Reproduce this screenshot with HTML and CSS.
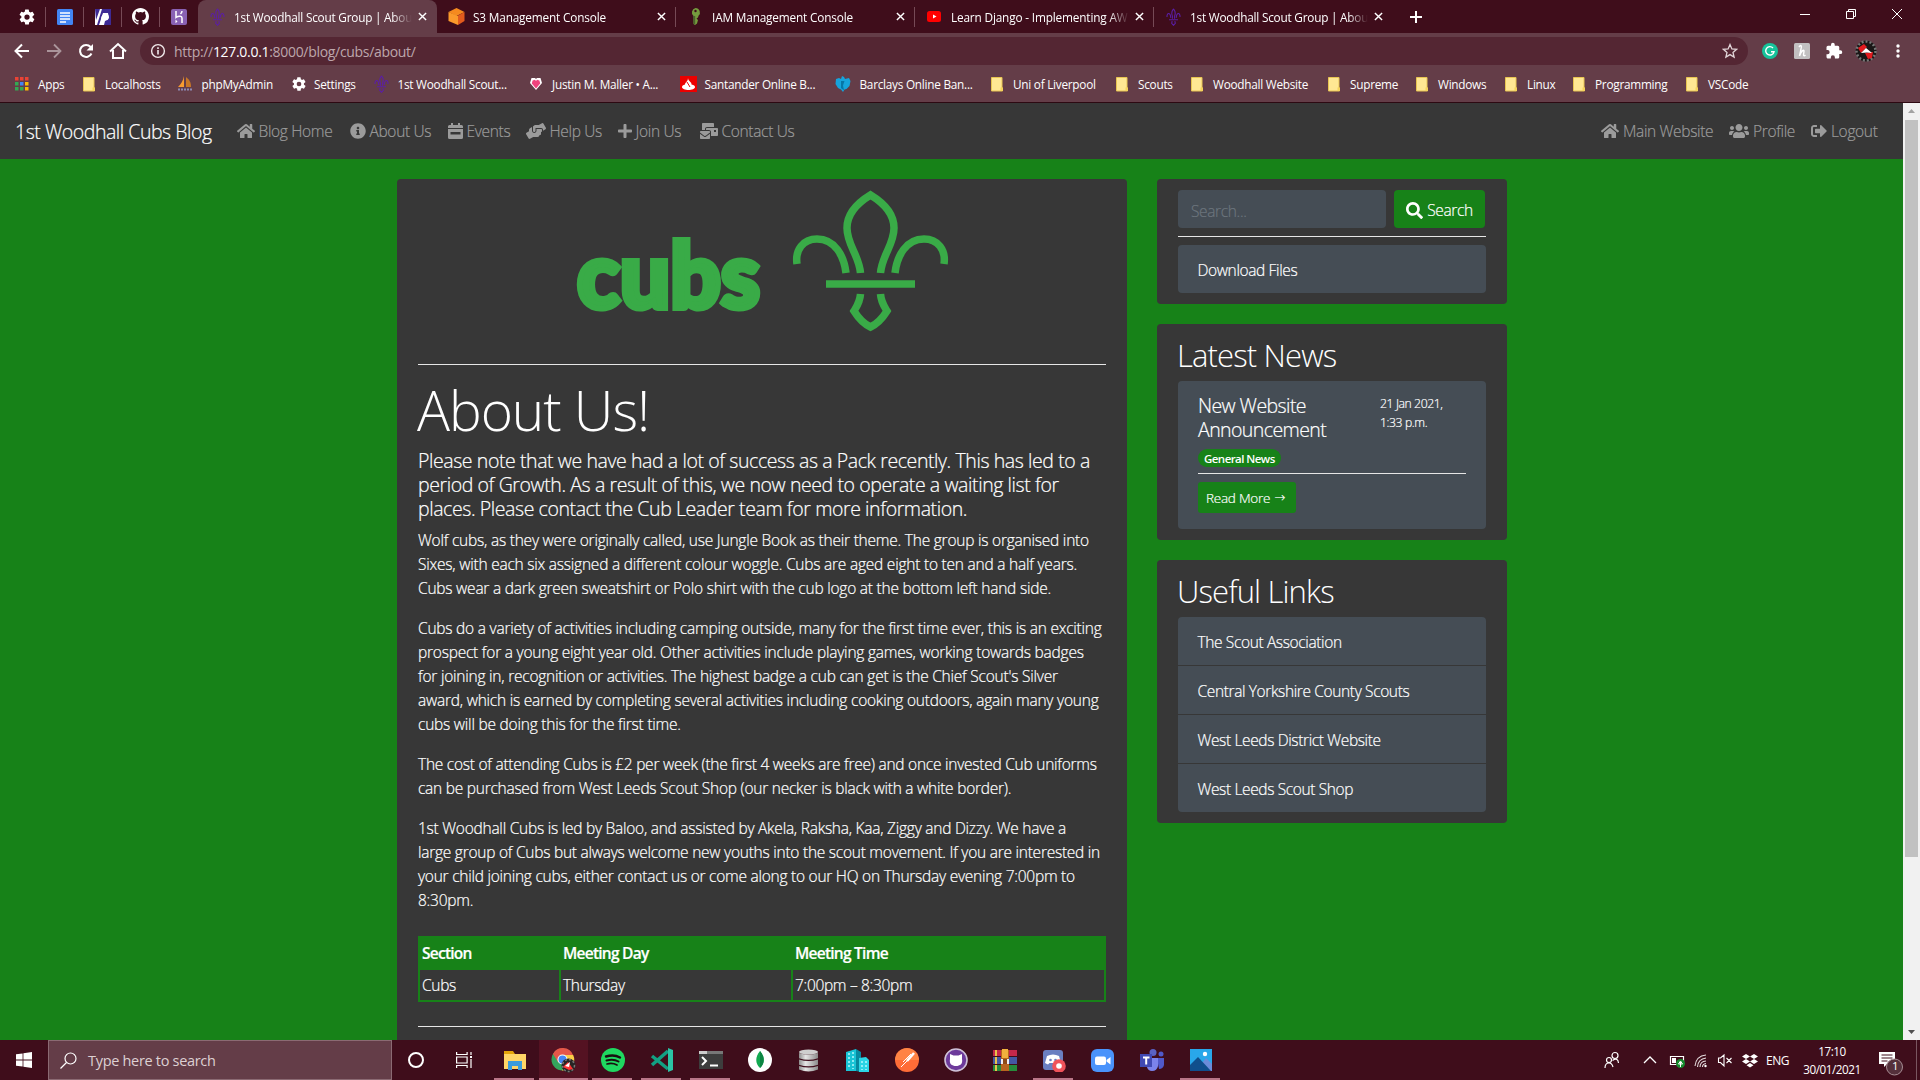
FILE: index.html
```html
<!DOCTYPE html>
<html lang="en">
<head>
<meta charset="utf-8">
<title>1st Woodhall Scout Group | About</title>
<link rel="stylesheet" href="styles.css">
</head>
<body>
<svg class="defs" width="0" height="0" aria-hidden="true">
  <symbol id="fleur" viewBox="0 0 16 20"><g fill="none" stroke="currentColor" stroke-width="1.2"><path d="M8 1C5.5 4 5.500 6 6.800 9V12M8 1c2.500 3 2.500 5 1.200 8v3M.8 10C.4 5 4.500 4.500 5 11M15.200 10c.4-5-3.700-5.500-4.200 1M3 13h10M6.500 14.500 6 17l2 2.200L10 17l-.5-2.500"/></g></symbol>
  <symbol id="gear" viewBox="0 0 24 24"><path fill="currentColor" fill-rule="evenodd" d="M19.400 13a7.500 7.500 0 0 0 0-2l2.100-1.700a.5.5 0 0 0 .1-.6l-2-3.500a.5.5 0 0 0-.6-.2l-2.500 1a7.300 7.300 0 0 0-1.700-1l-.4-2.600a.5.5 0 0 0-.5-.4h-4a.5.5 0 0 0-.5.400l-.4 2.600a7.700 7.700 0 0 0-1.700 1l-2.500-1a.5.5 0 0 0-.6.200l-2 3.500a.5.5 0 0 0 .1.600L4.500 11a7.500 7.500 0 0 0 0 2l-2.100 1.700a.5.5 0 0 0-.1.600l2 3.500c.1.200.4.300.6.200l2.500-1c.5.400 1.100.7 1.700 1l.4 2.600c0 .2.2.4.5.4h4c.2 0 .5-.2.5-.4l.4-2.600c.6-.3 1.200-.6 1.700-1l2.500 1c.2.100.5 0 .6-.2l2-3.500a.5.5 0 0 0-.1-.6zM12 15.500a3.500 3.500 0 1 1 0-7 3.500 3.500 0 0 1 0 7z"/></symbol>
  <symbol id="folder" viewBox="0 0 12 15"><path fill="#ffe793" stroke="#e8c552" d="M.5.5h10.500v10.500h.5v3H.5z"/><path fill="#f5d35b" d="M9.500 10.500H12V14H9.500z"/></symbol>
  <symbol id="close" viewBox="0 0 10 10"><path stroke="#fff" stroke-width="1.600" d="m1 1 8 8M9 1 1 9"/></symbol>
  <symbol id="home" viewBox="0 0 576 512"><path fill="currentColor" d="M280.370 148.260L96 300.110V464a16 16 0 0 0 16 16l112.060-.29a16 16 0 0 0 15.920-16V368a16 16 0 0 1 16-16h64a16 16 0 0 1 16 16v95.640a16 16 0 0 0 16 16.050L464 480a16 16 0 0 0 16-16V300L295.670 148.260a12.190 12.190 0 0 0-15.300 0zM571.600 251.470L488 182.560V44.050a12 12 0 0 0-12-12h-56a12 12 0 0 0-12 12v72.610L318.470 43a48 48 0 0 0-61 0L4.340 251.470a12 12 0 0 0-1.600 16.900l25.500 31A12 12 0 0 0 45.150 301l235.220-193.740a12.190 12.190 0 0 1 15.300 0L530.900 301a12 12 0 0 0 16.900-1.600l25.500-31a12 12 0 0 0-1.700-16.930z"/></symbol>
</svg>

<header class="browser">
  <div class="tabstrip">
    <div class="pinned"><svg width="18" height="18"><use href="#gear"/></svg></div>
    <div class="pinned"><svg width="16" height="16"><rect width="16" height="16" rx="1.500" fill="#4285f4"/><path stroke="#fff" stroke-width="1.500" d="M3 4h10M3 7h10M3 10h10M3 13h6"/></svg></div>
    <div class="pinned"><svg width="16" height="16"><path fill="#fff" d="M0 0h16v16H0z"/><path fill="#3e2a94" d="M0 0h5L1 11zM7 0h9v16H9l1-4 4-3-1-5H8L4 16H2z"/><path fill="none" stroke="#fff" stroke-width="1.500" d="M7 11c-1-6 6-7 6-3s-5 3-6 1"/></svg></div>
    <div class="pinned"><svg width="17" height="17" viewBox="0 0 16 16"><path fill="#fff" d="M8 0C3.580 0 0 3.580 0 8c0 3.540 2.290 6.530 5.470 7.590.4.070.55-.17.55-.38 0-.19-.01-.82-.01-1.490-2.010.37-2.530-.49-2.690-.94-.09-.23-.48-.94-.82-1.130-.28-.15-.68-.52-.01-.53.63-.01 1.080.58 1.230.82.72 1.210 1.870.87 2.330.66.070-.52.280-.87.510-1.070-1.780-.2-3.640-.89-3.640-3.950 0-.87.310-1.590.820-2.150-.08-.2-.36-1.020.08-2.120 0 0 .670-.21 2.200.82a7.600 7.600 0 0 1 4 0c1.530-1.040 2.200-.82 2.200-.82.440 1.100.160 1.920.080 2.120.510.560.820 1.270.820 2.150 0 3.070-1.870 3.750-3.650 3.950.290.250.540.730.540 1.480 0 1.070-.01 1.930-.01 2.200 0 .210.150.460.550.380A8 8 0 0 0 16 8c0-4.420-3.580-8-8-8z"/></svg></div>
    <div class="pinned last"><svg width="16" height="16"><rect width="16" height="16" rx="2" fill="#8961b3"/><path fill="none" stroke="#fff" stroke-width="1.500" d="M5 2v6.500c3-2 6-1.500 6 .500v5M11 2c0 1.500-.5 2-1.500 3"/><path fill="#fff" d="m4.500 10.500 2 2-2 1.800z"/></svg></div>
    <div class="tab active"><svg class="fav fleur" width="17" height="18"><use href="#fleur"/></svg><span>1st Woodhall Scout Group | Abou</span><svg class="x" width="9" height="9"><use href="#close"/></svg></div>
    <div class="tab"><svg class="fav" width="17" height="17"><path fill="#f58a1f" d="m8.500 0 8 4-8 4-8-4z"/><path fill="#fb9a2b" d="M.5 4 10 8v9L.5 13z"/><path fill="#e25b1d" d="M16.500 4 10 7.500V17l6.500-4z"/></svg><span>S3 Management Console</span><svg class="x" width="9" height="9"><use href="#close"/></svg></div>
    <div class="tab"><svg class="fav" width="17" height="17"><path fill="#759c3e" d="M8.500 0a4.500 4.500 0 0 1 3 7.800L11 9.500l-1.500 1L11 12l-1 3.500-2 1.500-1.500-1V8A4.600 4.600 0 0 1 8.500 0z"/><path fill="#4b612c" d="M6 8h2.200v8.500L6.500 15.500z"/><circle cx="8.500" cy="3" r="1.200" fill="#3f0d1b"/></svg><span>IAM Management Console</span><svg class="x" width="9" height="9"><use href="#close"/></svg></div>
    <div class="tab"><svg class="fav" width="17" height="17"><rect x="1" y="3" width="14" height="11" rx="2.500" fill="#f00"/><path fill="#fff" d="M7 6.500v4l3.500-2z"/></svg><span>Learn Django - Implementing AW</span><svg class="x" width="9" height="9"><use href="#close"/></svg></div>
    <div class="tab final"><svg class="fav fleur" width="17" height="18"><use href="#fleur"/></svg><span>1st Woodhall Scout Group | Abou</span><svg class="x" width="9" height="9"><use href="#close"/></svg></div>
    <svg class="newtab" width="14" height="14"><path stroke="#fff" stroke-width="2" d="M7 1v12M1 7h12"/></svg>
    <div class="winctl">
      <svg width="46" height="28"><path stroke="#fff" d="M18 14.500h10"/></svg>
      <svg width="46" height="28"><path fill="none" stroke="#fff" d="M18.500 11.500h7v7h-7zM20.500 11.500v-2h7v7h-2"/></svg>
      <svg width="46" height="28"><path stroke="#fff" d="m18 9 10 10M28 9 18 19"/></svg>
    </div>
  </div>

  <div class="toolbar">
    <div class="tool"><svg width="16" height="16"><path fill="none" stroke="#fff" stroke-width="2" d="M15 8H2m6-6.500L1.500 8 8 14.500"/></svg></div>
    <div class="tool dim"><svg width="16" height="16"><path fill="none" stroke="#fff" stroke-width="1.800" d="M1 8h13M8 1.500 14.500 8 8 14.500"/></svg></div>
    <div class="tool"><svg width="16" height="16"><path fill="none" stroke="#fff" stroke-width="2" d="M13.500 10.500A6 6 0 1 1 12.600 4"/><path fill="#fff" d="M15 1v6.500H8.500z"/></svg></div>
    <div class="tool"><svg width="18" height="18"><path fill="none" stroke="#fff" stroke-width="2" d="M1 9.500 9 2l8 7.500M4 8v8h10V8"/></svg></div>
    <div class="omnibox">
      <svg width="16" height="16"><circle cx="8" cy="8" r="6.400" fill="none" stroke="#f1e9eb" stroke-width="1.400"/><path stroke="#f1e9eb" stroke-width="1.600" d="M8 7v4.500M8 4.200v1.700"/></svg>
      <span class="url">http://<b>127.0.0.1</b>:8000/blog/cubs/about/</span>
      <svg class="star" width="16" height="16"><path fill="none" stroke="#e2d5d8" stroke-width="1.300" d="m8 1.500 1.900 4.400 4.700.4-3.600 3.100 1.100 4.700L8 11.600l-4.100 2.500L5 9.400 1.400 6.300l4.700-.4z"/></svg>
    </div>
    <div class="tool"><svg width="16" height="16"><circle cx="8" cy="8" r="8" fill="#15c39a"/><path fill="none" stroke="#fff" stroke-width="1.400" d="M11 5a4.200 4.200 0 1 0 1 3.800H9"/></svg></div>
    <div class="tool"><svg width="16" height="16"><rect width="16" height="16" rx="1.500" fill="#c2c0c1"/><path fill="none" stroke="#fff" stroke-width="1.400" d="M5 4c2-3 3-1 2 2l-1.500 7C7 8 10 6 10 8l-.5 4c0 1 1 1 2 0"/></svg></div>
    <div class="tool"><svg width="18" height="18" viewBox="0 0 24 24"><path fill="#fff" d="M20.500 11H19V7a2 2 0 0 0-2-2h-4V3.500a2.500 2.500 0 0 0-5 0V5H4a2 2 0 0 0-2 2v3.800h1.500a2.700 2.700 0 0 1 0 5.400H2V20c0 1.100.9 2 2 2h3.800v-1.500a2.700 2.700 0 0 1 5.400 0V22H17a2 2 0 0 0 2-2v-4h1.500a2.500 2.500 0 0 0 0-5z"/></svg></div>
    <div class="tool"><svg width="22" height="22"><circle cx="11" cy="11" r="10.500" fill="#1a1717"/><circle cx="11" cy="11" r="9.500" fill="none" stroke="#777" stroke-width="2.500" stroke-dasharray="2 2"/><path fill="#e11b1f" d="m3 8 6-4 3 3-6 6zM10 13l8-1-1 6-4 1z"/><path fill="#fff" d="m6 13 5-5 6 5-5-.5z"/></svg></div>
    <div class="tool"><svg width="4" height="16"><circle cx="2" cy="3" r="1.700" fill="#fff"/><circle cx="2" cy="8" r="1.700" fill="#fff"/><circle cx="2" cy="13" r="1.700" fill="#fff"/></svg></div>
  </div>

  <div class="bookmarks">
    <div><svg width="14" height="14"><path fill="#ea4335" d="M0 0h3.500v3.500H0zM5 0h3.500v3.500H5zM10 0h3.500v3.500H10z"/><path fill="#34a853" d="M0 5h3.500v3.500H0zM0 10h3.500v3.500H0zM5 10h3.500v3.500H5z"/><path fill="#4285f4" d="M5 5h3.500v3.500H5z"/><path fill="#fbbc05" d="M10 5h3.500v3.500H10zM10 10h3.500v3.500H10z"/></svg><span class="apps">Apps</span></div>
    <div><svg width="12" height="15"><use href="#folder"/></svg><span>Localhosts</span></div>
    <div class="wide"><svg width="17" height="16"><path fill="#f89c30" d="M7 0v11H1c3-3 5-6 6-11z"/><path fill="#c87727" d="M9 1c4 3 5 6 5 10H9z"/><path fill="none" stroke="#8d8ab4" stroke-width="2" d="M1 13.500h15" stroke-dasharray="2 1"/></svg><span>phpMyAdmin</span></div>
    <div><svg width="16" height="16"><use href="#gear"/></svg><span class="apps">Settings</span></div>
    <div class="wide"><svg class="fleur" width="17" height="18"><use href="#fleur"/></svg><span>1st Woodhall Scout...</span></div>
    <div><svg width="12" height="14"><path fill="#fff" d="M6 13 0 6l1.500-5H5l1 1 1-1h3.500L12 6z"/><path fill="#f0437d" d="M6 11.500 1.800 6.500l.8-3L5 2.800l1 1.200 1-1.200 2.400.7.8 3z"/></svg><span>Justin M. Maller • A...</span></div>
    <div class="wide"><svg width="17" height="16"><path fill="#ec0000" d="M0 0h17v16H0z"/><path fill="#fff" d="M8 2c0 3 4 4 3.500 6.500C14 9 15 10 15 11c0 4-13 4-13 0 0-1 1-2 3-2.500C5 6 8 6 8 2z"/><path stroke="#ec0000" fill="none" d="m7 6 3 5"/></svg><span>Santander Online B...</span></div>
    <div class="wide"><svg width="16" height="16"><path fill="#16a4dc" d="m7 0 2 1 1 2 4-1 1.500 3-1 5-3 3-2 .5L8 16l-2-2.500-3-1.500-2.500-4 .5-5L4 2l2 1z"/><path fill="#0677a8" d="M6 5v7l3 2.500-1-5L9.500 5z"/></svg><span>Barclays Online Ban...</span></div>
    <div><svg width="12" height="15"><use href="#folder"/></svg><span>Uni of Liverpool</span></div>
    <div><svg width="12" height="15"><use href="#folder"/></svg><span>Scouts</span></div>
    <div><svg width="12" height="15"><use href="#folder"/></svg><span>Woodhall Website</span></div>
    <div><svg width="12" height="15"><use href="#folder"/></svg><span>Supreme</span></div>
    <div><svg width="12" height="15"><use href="#folder"/></svg><span>Windows</span></div>
    <div><svg width="12" height="15"><use href="#folder"/></svg><span>Linux</span></div>
    <div><svg width="12" height="15"><use href="#folder"/></svg><span>Programming</span></div>
    <div><svg width="12" height="15"><use href="#folder"/></svg><span>VSCode</span></div>
  </div>
</header>

<div class="viewport">
  <div class="page">
    <nav class="navbar">
      <a class="brand">1st Woodhall Cubs Blog</a>
      <div class="links">
        <a><svg width="18" height="16"><use href="#home"/></svg>Blog Home</a>
        <a><svg width="16" height="16" viewBox="0 0 512 512"><path fill="currentColor" d="M256 8C119.043 8 8 119.083 8 256c0 136.997 111.043 248 248 248s248-111.003 248-248C504 119.083 392.957 8 256 8zm0 110c23.196 0 42 18.804 42 42s-18.804 42-42 42-42-18.804-42-42 18.804-42 42-42zm56 254c0 6.627-5.373 12-12 12h-88c-6.627 0-12-5.373-12-12v-24c0-6.627 5.373-12 12-12h12v-64h-12c-6.627 0-12-5.373-12-12v-24c0-6.627 5.373-12 12-12h64c6.627 0 12 5.373 12 12v100h12c6.627 0 12 5.373 12 12v24z"/></svg>About Us</a>
        <a><svg width="15" height="16"><path fill="currentColor" fill-rule="evenodd" d="M3 0h2v2h5V0h2v2h1.500A1.500 1.500 0 0 1 15 3.500V5H0V3.500A1.500 1.500 0 0 1 1.500 2H3zM0 6h15v8.500a1.500 1.500 0 0 1-1.500 1.500h-12A1.500 1.500 0 0 1 0 14.500zm2.500 3v2.500h10V9z"/></svg>Events</a>
        <a><svg width="20" height="16" viewBox="0 0 640 512"><path fill="currentColor" d="M488 192H336v56c0 39.700-32.300 72-72 72s-72-32.300-72-72V126.400l-64.900 39C107.800 176.900 96 197.800 96 220.200v47.300l-80 46.200C.7 322.500-4.600 342.100 4.300 357.400l80 138.600c8.800 15.300 28.400 20.500 43.700 11.700L231.400 448H368c35.300 0 64-28.700 64-64h16c17.700 0 32-14.300 32-32v-64h8c13.300 0 24-10.700 24-24v-48c0-13.300-10.700-24-24-24zm147.700-37.400L555.700 16C546.900.7 527.300-4.500 512 4.300L408.600 64H306.400c-12 0-23.700 3.400-33.900 9.700L239 94.600c-9.400 5.800-15 16.100-15 27.100V248c0 22.100 17.900 40 40 40s40-17.900 40-40v-88h184c30.900 0 56 25.100 56 56v28.500l80-46.200c15.300-8.900 20.500-28.400 11.700-43.700z"/></svg>Help Us</a>
        <a><svg width="14" height="16" viewBox="0 0 448 512"><path fill="currentColor" d="M416 208H272V64c0-17.670-14.330-32-32-32h-32c-17.670 0-32 14.330-32 32v144H32c-17.670 0-32 14.330-32 32v32c0 17.670 14.330 32 32 32h144v144c0 17.670 14.330 32 32 32h32c17.670 0 32-14.330 32-32V304h144c17.670 0 32-14.330 32-32v-32c0-17.670-14.330-32-32-32z"/></svg>Join Us</a>
        <a><svg width="18" height="16" viewBox="0 0 576 512"><path fill="currentColor" d="M160 448c-25.600 0-51.200-22.400-64-32-64-44.800-83.200-60.800-96-70.400V480c0 17.670 14.330 32 32 32h256c17.670 0 32-14.330 32-32V345.600c-12.800 9.600-32 25.600-96 70.400-12.800 9.600-38.400 32-64 32zm128-192H32c-17.670 0-32 14.330-32 32v16c25.600 19.200 22.400 19.200 115.200 86.400 9.600 6.400 28.800 25.600 44.800 25.600s35.200-19.200 44.800-22.400c92.800-67.200 89.600-67.200 115.200-86.400V288c0-17.670-14.330-32-32-32zm256-96H224c-17.670 0-32 14.330-32 32v32h96c33.210 0 60.590 25.420 63.710 57.820l.290-.22V416h192c17.670 0 32-14.330 32-32V192c0-17.670-14.330-32-32-32zm-32 128h-64v-64h64v64zm-352-96c0-35.290 28.710-64 64-64h224V32c0-17.670-14.330-32-32-32H96C78.330 0 64 14.330 64 32v192h96v-32z"/></svg>Contact Us</a>
      </div>
      <div class="links account">
        <a><svg width="18" height="16"><use href="#home"/></svg>Main Website</a>
        <a><svg width="20" height="16" viewBox="0 0 640 512"><path fill="currentColor" d="M96 224c35.300 0 64-28.700 64-64s-28.700-64-64-64-64 28.700-64 64 28.700 64 64 64zm448 0c35.300 0 64-28.700 64-64s-28.700-64-64-64-64 28.700-64 64 28.700 64 64 64zm32 32h-64c-17.600 0-33.500 7.100-45.100 18.600 40.300 22.100 68.900 62 75.100 109.400h66c17.700 0 32-14.300 32-32v-32c0-35.300-28.700-64-64-64zm-256 0c61.900 0 112-50.100 112-112S381.900 32 320 32 208 82.100 208 144s50.100 112 112 112zm76.800 32h-8.300c-20.800 10-43.900 16-68.500 16s-47.600-6-68.500-16h-8.300C179.600 288 128 339.600 128 403.200V432c0 26.500 21.500 48 48 48h288c26.500 0 48-21.500 48-48v-28.800c0-63.600-51.600-115.200-115.200-115.200zm-223.700-13.400C161.500 263.100 145.600 256 128 256H64c-35.300 0-64 28.700-64 64v32c0 17.700 14.300 32 32 32h65.900c6.300-47.400 34.900-87.300 75.200-109.400z"/></svg>Profile</a>
        <a><svg width="16" height="16" viewBox="0 0 512 512"><path fill="currentColor" d="M497 273L329 441c-15 15-41 4.500-41-17v-96H152c-13.300 0-24-10.700-24-24v-96c0-13.300 10.700-24 24-24h136V88c0-21.400 25.900-32 41-17l168 168c9.300 9.400 9.300 24.600 0 34zM192 436v-40c0-6.600-5.400-12-12-12H96c-17.700 0-32-14.300-32-32V160c0-17.700 14.300-32 32-32h84c6.600 0 12-5.400 12-12V76c0-6.600-5.400-12-12-12H96c-53 0-96 43-96 96v192c0 53 43 96 96 96h84c6.600 0 12-5.400 12-12z"/></svg>Logout</a>
      </div>
    </nav>

    <main class="layout">
      <article class="card about">
        <svg class="logo" width="374" height="142" viewBox="0 0 374 142">
          <text class="wordmark" x="2" y="117.500" textLength="183" lengthAdjust="spacingAndGlyphs">cubs</text>
          <g fill="none" stroke="#39ab47" stroke-width="7.500" stroke-miterlimit="6">
            <path d="M285.500 83C284 65 272 55 272 38 272 22 284 12 295.500 5 307 12 319 22 319 38 319 55 307 65 305.500 83"/>
            <path d="M222 74C220 60 228 49 242 49 260 49 269 66 271 83M369 74C371 60 363 49 349 49 331 49 322 66 320 83"/>
            <path d="M251 94h89"/>
            <path d="M285.500 104C285 112 282 116 279 121 284 129 289 134 295.500 137 302 134 307 129 312 121 309 116 306 112 305.500 104"/>
          </g>
        </svg>
        <hr>
        <h1>About Us!</h1>
        <h5>Please note that we have had a lot of success as a Pack recently. This has led to a<br>period of Growth. As a result of this, we now need to operate a waiting list for<br>places. Please contact the Cub Leader team for more information.</h5>
        <p>Wolf cubs, as they were originally called, use Jungle Book as their theme. The group is organised into<br>Sixes, with each six assigned a different colour woggle. Cubs are aged eight to ten and a half years.<br>Cubs wear a dark green sweatshirt or Polo shirt with the cub logo at the bottom left hand side.</p>
        <p>Cubs do a variety of activities including camping outside, many for the first time ever, this is an exciting<br>prospect for a young eight year old. Other activities include playing games, working towards badges<br>for joining in, recognition or activities. The highest badge a cub can get is the Chief Scout's Silver<br>award, which is earned by completing several activities including cooking outdoors, again many young<br>cubs will be doing this for the first time.</p>
        <p class="snug">The cost of attending Cubs is £2 per week (the first 4 weeks are free) and once invested Cub uniforms<br>can be purchased from West Leeds Scout Shop (our necker is black with a white border).</p>
        <p class="snug">1st Woodhall Cubs is led by Baloo, and assisted by Akela, Raksha, Kaa, Ziggy and Dizzy. We have a<br>large group of Cubs but always welcome new youths into the scout movement. If you are interested in<br>your child joining cubs, either contact us or come along to our HQ on Thursday evening 7:00pm to<br>8:30pm.</p>
        <table>
          <thead><tr><th class="c1">Section</th><th class="c2">Meeting Day</th><th>Meeting Time</th></tr></thead>
          <tbody><tr><td>Cubs</td><td>Thursday</td><td>7:00pm – 8:30pm</td></tr></tbody>
        </table>
        <hr>
      </article>

      <aside>
        <section class="card tools">
          <form class="search"><input type="text" placeholder="Search..."><button type="button"><svg width="17" height="17" viewBox="0 0 512 512"><path fill="currentColor" d="M505 442.700L405.300 343c-4.500-4.500-10.600-7-17-7H372c27.600-35.300 44-79.700 44-128C416 93.100 322.900 0 208 0S0 93.100 0 208s93.100 208 208 208c48.300 0 92.700-16.400 128-44v16.300c0 6.400 2.500 12.500 7 17l99.700 99.700c9.400 9.400 24.600 9.400 33.900 0l28.300-28.300c9.400-9.400 9.400-24.600.1-34zM208 336c-70.700 0-128-57.200-128-128 0-70.700 57.200-128 128-128 70.700 0 128 57.200 128 128 0 70.700-57.200 128-128 128z"/></svg>Search</button></form>
          <hr>
          <div class="list"><a>Download Files</a></div>
        </section>
        <section class="card news">
          <h2>Latest News</h2>
          <div class="post">
            <div class="post-head"><h5>New Website<br>Announcement</h5><small>21 Jan 2021,<br>1:33 p.m.</small></div>
            <span class="badge">General News</span>
            <hr>
            <a class="more">Read More <span class="arrow">→</span></a>
          </div>
        </section>
        <section class="card">
          <h2>Useful Links</h2>
          <div class="list"><a>The Scout Association</a><a>Central Yorkshire County Scouts</a><a>West Leeds District Website</a><a>West Leeds Scout Shop</a></div>
        </section>
      </aside>
    </main>
  </div>
  <div class="scrollbar">
    <svg width="17" height="17"><path fill="#a3a3a3" d="m8.500 6 3.500 4H5z"/></svg>
    <div class="thumb"></div>
    <svg width="17" height="17"><path fill="#505050" d="M5 7h7l-3.500 4z"/></svg>
  </div>
</div>

<footer class="taskbar">
  <div class="start"><svg width="16" height="16"><path fill="#fff" d="M0 2.300 6.600 1.400v6.200H0zM7.400 1.300 16 0v7.600H7.400zM0 8.400h6.600v6.200L0 13.700zM7.400 8.400H16V16l-8.600-1.300z"/></svg></div>
  <div class="find"><svg width="17" height="17"><circle cx="10.500" cy="6.500" r="5.500" fill="none" stroke="#fff" stroke-width="1.200"/><path stroke="#fff" stroke-width="1.200" d="M6.500 10.500.5 16.500"/></svg><span>Type here to search</span></div>
  <div class="app plain"><svg width="18" height="18"><circle cx="9" cy="9" r="7" fill="none" stroke="#fff" stroke-width="2"/></svg></div>
  <div class="app plain"><svg width="17" height="16"><path fill="none" stroke="#fff" stroke-width="1.200" d="M.6 0v2.500h10.500V0M.6 16v-2.500h10.500V16M.6 5h10.500v6H.6zM15 0v3M15 7v9"/><path fill="#fff" d="M14 4h2v2h-2z"/></svg></div>
  <div class="app open"><svg width="22" height="19"><path fill="#e5a50a" d="M0 0h9l2 3H0z"/><path fill="#ffd567" d="M0 3h22v15H0z"/><path fill="#3b9bdc" d="M4 10h14v9h-4v-4H8v4H4z"/></svg></div>
  <div class="app open current"><svg width="25" height="25"><circle cx="11.500" cy="11.500" r="11" fill="#34a45d"/><path fill="#e65749" d="M2 6a11 11 0 0 1 20 1H11.500L7 14z"/><path fill="#fccd47" d="M12 7h10.200A11 11 0 0 1 11 22.500l5-8z"/><circle cx="11.500" cy="11.500" r="5" fill="#fff"/><circle cx="11.500" cy="11.500" r="4" fill="#4587f4"/><circle cx="17.500" cy="17.500" r="7" fill="#282424"/><circle cx="17.500" cy="17.500" r="6" fill="none" stroke="#777" stroke-width="1.500" stroke-dasharray="2"/><path fill="#f33" d="m12 19 5-5 5 7-4 1z"/><path fill="#fff" d="m14 18 5-4-1 5z"/></svg></div>
  <div class="app open"><svg width="24" height="24"><circle cx="12" cy="12" r="12" fill="#1fd860"/><g fill="none" stroke="#190f10" stroke-linecap="round"><path stroke-width="2.400" d="M5 8.500q8-2.500 14 1"/><path stroke-width="2" d="M5.500 12.500q7-2 12 1"/><path stroke-width="1.700" d="M6 16q5.500-1.500 10 1"/></g></svg></div>
  <div class="app open"><svg width="24" height="24"><path fill="none" stroke="#12a083" stroke-width="3.500" d="M18 3 2 17M2 8l16 13"/><path fill="#2bc4a5" d="m18 0 5 2v20l-5 2z"/></svg></div>
  <div class="app open"><svg width="24" height="18"><path fill="#3d3d3d" d="M0 0h24v18H0z"/><path fill="#777" d="M0 0h24v3H0z"/><path fill="#ccc" d="M0 0h8v3H0z"/><path fill="none" stroke="#fff" stroke-width="2" d="m3 6 4 4-4 4M11 14.500h8"/></svg></div>
  <div class="app"><svg width="24" height="24"><circle cx="12" cy="12" r="12" fill="#fff"/><path fill="#13aa52" d="M12 3c5 6 5 12 0 17-5-5-5-11 0-17z"/><path fill="#0d8543" d="M12 3c5 6 5 12 0 17z"/></svg></div>
  <div class="app"><svg width="23" height="23"><defs><linearGradient id="disk"><stop stop-color="#8d8d8d"/><stop offset=".35" stop-color="#e6e6e6"/><stop offset="1" stop-color="#8a8a8a"/></linearGradient></defs><g fill="url(#disk)"><path d="M2 17q9.500 3 19 0v3.500q-9.500 4-19 0zM2 10.500q9.500 3 19 0v5.300q-9.500 3-19 0zM2 4q9.500 3 19 0v5.300q-9.500 3-19 0z"/></g><ellipse cx="11.500" cy="3" rx="9.500" ry="2.400" fill="#cfcfcf"/></svg></div>
  <div class="app"><svg width="23" height="23"><path fill="#19c4d6" d="M0 3 10 0v22H0z"/><path fill="#0789a0" d="m10 0 5 3v20l-5-1z"/><path fill="#2bd5e5" d="m13 9 7-1 3 3v12H13z"/><path stroke="#b2f6fb" stroke-width="1.500" stroke-dasharray="2 2" d="M3 4v16M7 3v17M16 12v9M20 12v9"/></svg></div>
  <div class="app"><svg width="24" height="24"><circle cx="12" cy="12" r="12" fill="#ff6c37"/><path fill="#ff934d" d="M0 12a12 12 0 0 1 24 0z" opacity=".6"/><path stroke="#fff" stroke-width="2.500" d="m19 5-7 8"/><path stroke="#fff" d="m13 12-7 7M16 6l-8 8"/></svg></div>
  <div class="app"><svg width="24" height="24"><circle cx="12" cy="12" r="11" fill="#6d3a9b" stroke="#cfc2d8" stroke-width="1.600"/><path fill="#fff" d="m6 6 3.500 1.500h5L18 6v5c1 5-2 7-6 7s-7-2-6-7z"/></svg></div>
  <div class="app"><svg width="24" height="23"><path fill="#c6274a" d="M0 1h24v6H0z"/><path fill="#4458a3" d="M0 8h24v7H0z"/><path fill="#278b3b" d="M0 16h24v6H0z"/><path fill="#e8c34b" d="M2 1h2v6H2zM2 8h2v7H2zM2 16h2v6H2z"/><path fill="#b8641f" d="M8 1h8v21H8z"/><path fill="#f2b13e" d="M9 0h6v9H9z"/><path fill="#eee" d="M8 10h8v5H8z"/><path fill="#8d4a19" d="M10 10h4v5h-4z"/></svg></div>
  <div class="app open"><svg width="24" height="24"><rect x="1" y="2" width="20" height="20" rx="3" fill="#6a7fc1"/><path fill="#fff" d="M5 8q6-3 12 0l2 7-3 1.500-1.500-1.500h-7L6 16.500 3 15z"/><circle cx="8.500" cy="12" r="1.300" fill="#6a7fc1"/><circle cx="13.500" cy="12" r="1.300" fill="#6a7fc1"/><circle cx="17" cy="18" r="6.800" fill="#f0525a"/><circle cx="17" cy="18" r="2.800" fill="#fff"/></svg></div>
  <div class="app"><svg width="23" height="23"><rect width="23" height="23" rx="6" fill="#4a93fb"/><rect x="4" y="7.500" width="11" height="8.500" rx="2" fill="#fff"/><path fill="#fff" d="m15.500 11 4-3v7.500l-4-3z"/></svg></div>
  <div class="app"><svg width="24" height="23"><circle cx="13" cy="3.500" r="3.500" fill="#5a62c3"/><circle cx="21" cy="5" r="2.500" fill="#5059c9"/><path fill="#5059c9" d="M17 9h7v7q-1 4-5 4z"/><path fill="#7b83eb" d="M8 9h10v8q-1 5-6 5-4 0-5-4z"/><path fill="#4049b3" d="M0 5h12v13H0z"/><path stroke="#fff" stroke-width="2" d="M3 8.500h6.500M6.200 8v7.500"/></svg></div>
  <div class="app open"><svg width="22" height="22"><path fill="#29a7ea" d="M0 0h22v22H0z"/><circle cx="15" cy="5" r="2.200" fill="#fff"/><path fill="#6b8cd9" d="m12 14 4-5 6 6v7H12z"/><path fill="#104f8c" d="m0 16 8-8 13 14H0z"/></svg></div>
  <div class="tray">
    <svg width="36" height="18"><g fill="none" stroke="#fff" stroke-width="1.200"><circle cx="20" cy="4.500" r="3"/><circle cx="14" cy="9" r="2.500"/><path d="M17.500 9.500Q23 6 23.500 12M10 17q0-5 4-5 3 0 4 4"/></g></svg>
    <svg width="36" height="18"><path fill="none" stroke="#fff" stroke-width="1.300" d="m13 12 6-6 6 6"/></svg>
    <svg width="24" height="18"><path fill="none" stroke="#fff" stroke-width="1.200" d="M3.500 5.500h13v8h-13z"/><path fill="#fff" d="M5 7h4v5H5z"/><circle cx="13.500" cy="12.500" r="4.500" fill="#158c2d"/><path stroke="#fff" fill="none" d="M13.500 16v-5M11.500 13l2-3 2 3z"/></svg>
    <svg width="24" height="18"><g fill="none" stroke="#e5dbdd" stroke-width="1.100"><path d="M4 15Q5 5 15 4M6.500 16Q7 8 15 7M9 16q0-5.500 6-6M11.500 16q0-3 3.500-3.500"/></g><circle cx="14.500" cy="15" r="1.200" fill="#fff"/></svg>
    <svg width="22" height="18"><path fill="none" stroke="#fff" stroke-width="1.100" d="M3.500 7h2L9 4v11l-3.500-3.500h-2zM11.500 7l5 5M16.500 7l-5 5"/></svg>
    <svg width="26" height="18"><path fill="#fff" d="m9 3 4 2.500L9 8 5 5.500zM17 3l4 2.500L17 8l-4-2.500zM9 8l4 2.500L9 13l-4-2.500zM17 8l4 2.500-4 2.500-4-2.500zM13 12l3.500 2.200L13 16.500l-3.500-2.300z"/></svg>
    <span class="lang">ENG</span>
    <div class="clock"><span>17:10</span><span>30/01/2021</span></div>
    <div class="notify"><svg width="26" height="26"><path fill="#fff" d="M1 2h16v12H9l-3 3v-3H1z"/><path stroke="#3f0d1b" stroke-width="1.200" d="M3.500 5h11M3.500 8h11M3.500 11h6"/><circle cx="16.500" cy="17" r="8" fill="#54303b" stroke="#a78d94"/></svg><b>1</b></div>
  </div>
</footer>
</body>
</html>
```
FILE: styles.css
```css
* { box-sizing: border-box; }
body {
  margin: 0; width: 1920px; height: 1080px; overflow: hidden;
  display: flex; flex-direction: column;
  font-family: "Open Sans", "Noto Sans", sans-serif; color: #fff;
}
svg { display: block; flex: none; }
.defs { position: absolute; }

/* browser frame */
.browser { height: 103px; flex: none; border-bottom: 1px solid #2d0912; background: #643d48; }
.tabstrip { height: 33px; display: flex; align-items: center; background: #3f0d1b; padding-left: 8px; }
.pinned { width: 38px; height: 20px; display: flex; align-items: center; justify-content: center; border-right: 1px solid #764a56; }
.pinned.last { border: 0; }
.tab { width: 239px; height: 33px; display: flex; align-items: center; padding: 0 10px 0 11px; font-size: 11.8px; letter-spacing: -.16px; position: relative; }
.tab span { width: 180px; margin: 0 -3px 0 8px; white-space: nowrap; }
.tab span { -webkit-mask-image: linear-gradient(90deg, #000 158px, transparent 178px); mask-image: linear-gradient(90deg, #000 158px, transparent 178px); }
.tab:not(.active)::after { content: ""; position: absolute; right: 0; top: 7px; height: 20px; border-right: 1px solid #764a56; }
.tab.final::after { display: none; }
.tab.active, .tab.final { letter-spacing: -.22px; }
.tab.active { background: #643d48; border-radius: 8px 8px 0 0; }
.tab .x { margin-left: 7px; }
.fleur { color: #5b1ea6; }
.newtab { margin-left: 16px; }
.winctl { margin-left: auto; display: flex; height: 33px; }
.toolbar { height: 36px; display: flex; align-items: center; padding: 0 6px; }
.tool { width: 32px; display: flex; justify-content: center; }
.tool.dim { opacity: .45; }
.omnibox { flex: 1; height: 28px; margin: 0 6px; border-radius: 14px; background: #542633; display: flex; align-items: center; padding: 0 10px; }
.url { margin-left: 8px; font-size: 14px; letter-spacing: -.31px; color: #bda6ac; }
.url b { font-weight: 400; color: #fff; }
.star { margin-left: auto; }
.bookmarks {
  height: 30px; padding: 0 0 0 15px; display: grid; align-items: center;
  grid-template-columns: 68px 94px 114px 82px 157px 150px 155px 156px 125px 75px 137px 88px 89px 68px 113px 80px;
  font-size: 11.8px; letter-spacing: -.26px; white-space: nowrap;
}
.bookmarks div { display: grid; grid-template-columns: 22px 1fr; align-items: center; }
.bookmarks div.wide { grid-template-columns: 24.5px 1fr; }
.bookmarks .apps { padding-left: 1px; }

/* site */
.viewport { flex: 1; min-height: 0; display: flex; overflow: hidden; }
.page { flex: 1; background: #178218; overflow: hidden; font-weight: 300; -webkit-text-stroke: .2px; }
.scrollbar { width: 17px; background: #f1f1f1; display: flex; flex-direction: column; }
.scrollbar .thumb { height: 737px; margin: 0 2px auto; background: #c1c1c1; }
.navbar { height: 56px; padding: 0 0 0 15px; display: flex; align-items: center; background: #373737; }
.brand { width: 221.5px; font-size: 19.5px; letter-spacing: -.47px; white-space: nowrap; }
.links { display: grid; grid-template-columns: 113px 98px 78px 92px 82px 100px; font-size: 15.5px; letter-spacing: -.33px; color: #9b9b9b; white-space: nowrap; }
.links a { display: flex; align-items: center; gap: 4px; }
.links.account { margin-left: auto; grid-template-columns: 128px 82px 92px; }
.layout { width: 1110px; margin: 20px 0 0 397px; display: grid; grid-template-columns: 730px 350px; justify-content: space-between; }
.card { background: #373737; border-radius: 4px; }
hr { border: 0; height: 1px; background: #e6e6e6; margin: 0; }
h1, h2, h5, p { margin: 0; font-weight: 300; white-space: nowrap; }
.about { padding: 11px 21px 0; height: 1000px; }
.logo { margin: 0 auto 32px; overflow: visible; }
.wordmark { font: 900 92px Lato, "Open Sans", sans-serif; fill: #39ab47; stroke: #39ab47; stroke-width: 6px; }
h1 { font-size: 55px; line-height: 67px; letter-spacing: -1.050px; margin: 11px 0 6px -1px; -webkit-text-stroke: 0; }
h5 { font-size: 19.500px; line-height: 24px; letter-spacing: -.415px; margin-bottom: 7px; }
p { font-size: 15.500px; line-height: 24px; letter-spacing: -.225px; margin-bottom: 16px; }
p.snug { letter-spacing: -.25px; }
table { width: 688px; margin: 24px 0 24px; border-collapse: collapse; table-layout: fixed; font-size: 15.500px; letter-spacing: -.32px; line-height: 24px; border: 2px solid #178218; }
.c1 { width: 141px; }
.c2 { width: 232px; }
th, td { text-align: left; padding: 3px 2px; border: 2px solid #178218; white-space: nowrap; }
th { background: #178218; font-weight: 600; letter-spacing: -.75px; }
aside { display: flex; flex-direction: column; gap: 20px; }
aside .card { padding: 11px 21px; }
.search { display: flex; gap: 8px; margin-bottom: 8px; }
.search input { width: 208px; height: 38px; border: 0; border-radius: 4px; background: #454d55; padding: 3px 13px 0; font: 300 15.500px "Open Sans", sans-serif; letter-spacing: -.36px; }
.search input::placeholder { color: #6c757d; opacity: 1; }
.search button { width: 91px; height: 38px; border: 0; border-radius: 4px; background: #178218; color: #fff; display: flex; align-items: center; justify-content: center; gap: 4px; padding: 2px 0 0; font: 300 15.500px "Open Sans", sans-serif; letter-spacing: -.36px; }
.tools .list { margin-top: 8px; }
.list { border-radius: 4px; overflow: hidden; }
.list a { display: flex; align-items: center; height: 48px; padding: 1px 0 0 19.500px; background: #454d55; font-size: 15.500px; letter-spacing: -.37px; }
.list a + a { margin-top: 1px; }
h2 { font-size: 31px; letter-spacing: -.86px; line-height: 38px; margin: 1px 0 7px -1px; -webkit-text-stroke: 0; }
.post { height: 148px; padding: 13px 20px 0; border-radius: 4px; background: #454d55; }
.post-head { display: flex; }
.post h5 { width: 182px; letter-spacing: -.58px; margin-bottom: 7px; }
.post small { font-size: 12.200px; line-height: 19px; letter-spacing: -.4px; }
.badge { display: flex; align-items: center; width: 83px; height: 18px; padding-left: 6px; border-radius: 9px; background: #178218; font-size: 11.500px; font-weight: 600; letter-spacing: -.55px; white-space: nowrap; -webkit-text-stroke: 0; }
.post hr { margin: 6px 0 8px; }
.more { display: flex; align-items: center; gap: 4px; width: 98px; height: 31px; padding-left: 8px; border-radius: 3px; background: #178218; font-size: 13.500px; letter-spacing: -.25px; white-space: nowrap; }
.arrow { font-family: "DejaVu Sans", sans-serif; font-size: 13px; }

/* taskbar */
.taskbar { height: 40px; flex: none; display: flex; background: #3f0d1b; }
.start { width: 48px; display: flex; align-items: center; justify-content: center; }
.find { width: 344px; display: flex; align-items: center; gap: 11px; padding-left: 11px; background: #643d48; border: 1px solid #8b6a73; font-size: 14.500px; letter-spacing: -.31px; color: #ddd0d3; }
.app { width: 49px; display: flex; align-items: center; justify-content: center; position: relative; }
.app.plain { padding-right: 2px; }
.app.open::after { content: ""; position: absolute; left: 4px; right: 5px; bottom: 0; height: 2px; background: #b97688; }
.app.current { background: #541222; }
.app.current::after { left: 0; right: 0; }
.tray { flex: 1; margin-left: auto; display: flex; align-items: center; justify-content: flex-end; padding-right: 3px; font-size: 11.700px; letter-spacing: -.45px; }
.lang { width: 29px; text-align: center; font-size: 12px; letter-spacing: -.4px; }
.clock { width: 82px; line-height: 18px; padding-right: 2px; display: flex; flex-direction: column; align-items: center; }
.notify { position: relative; width: 43px; height: 40px; padding: 10px 0 0 4px; border-right: 1px solid #7a5660; }
.notify b { position: absolute; left: 18px; top: 18px; font-size: 11.500px; font-weight: 400; }
```
